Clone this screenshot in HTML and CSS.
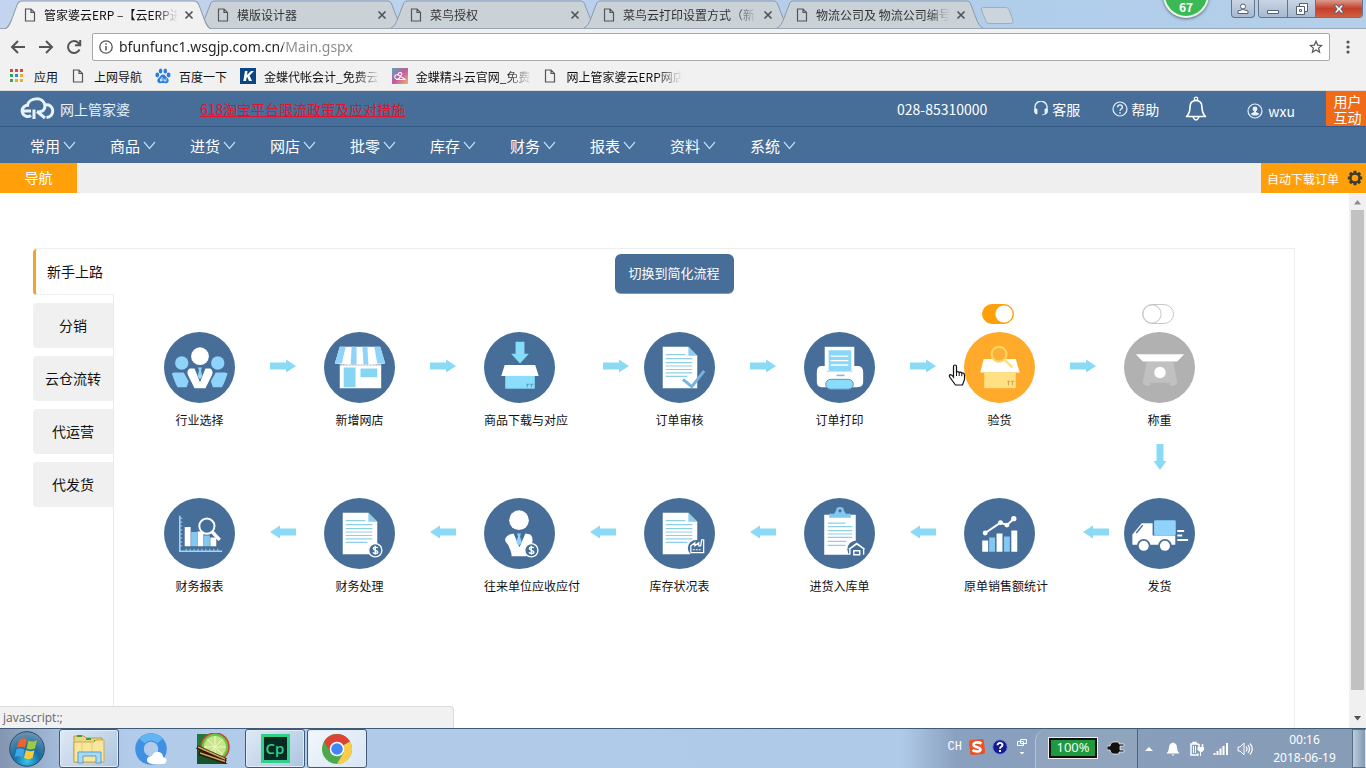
FILE: index.html
```html
<!DOCTYPE html>
<html lang="zh-CN">
<head>
<meta charset="utf-8">
<title>管家婆云ERP</title>
<link rel="stylesheet" href="styles.css">
</head>
<body>
<svg class="defs" aria-hidden="true">
  <defs>
    <symbol id="doc" viewBox="0 0 12 14"><path d="M1.5 1h5.500l3.500 3.500V13h-9zM7 1v3.500h3.500" fill="none" stroke="currentColor" stroke-width="1.200"/></symbol>
    <symbol id="close" viewBox="0 0 10 10"><path d="M1.500 1.500l7 7M8.500 1.500l-7 7" stroke="currentColor" stroke-width="1.700"/></symbol>
    <symbol id="tab-shape" viewBox="0 0 206 28" preserveAspectRatio="none"><path d="M0 28C4 26 5 23 7 18L12 5C13 2 14 1 17 1H189C192 1 193 2 194 5L199 18C201 23 202 26 206 28" stroke="#8d99a8"/></symbol>
    <symbol id="chev" viewBox="0 0 13 9"><path d="M1 1l5.500 6.500L12 1" fill="none" stroke="#b9dcf7" stroke-width="1.200"/></symbol>
    <symbol id="arrow" viewBox="0 0 26 14"><path d="M0 3.500h16V0.500L26 7l-10 6.500v-3H0z" fill="#8bdaf5"/></symbol>
    <symbol id="page" viewBox="0 0 72 72"><path d="M19 15h26l9 9v33H19z" fill="#fff"/><path d="M45 15v9h9z" fill="#8ecdf0"/><path d="M22 23h20M22 27h27M22 31h27M22 34.500h27M22 38h27M22 41.500h27M22 45h22" stroke="#8fcfe6" stroke-width="1.200"/></symbol>
    <symbol id="coin" viewBox="0 0 16 16"><circle cx="8" cy="8" r="6.700" fill="#476e98" stroke="#fff" stroke-width="1.400"/><path d="M10.500 5.700C9.800 4.600 6 4.200 6 6.300S10.500 7.700 10.500 9.800 6.500 11.700 5.500 10.200M8 3.500v9" fill="none" stroke="#fff" stroke-width="1.400"/></symbol>
  </defs>
</svg>

<header class="browser">
  <div class="tabstrip">
    <div class="tab active"><svg class="tab-bg"><use href="#tab-shape"/></svg><svg class="doc"><use href="#doc"/></svg><span class="tab-title">管家婆云ERP –【云ERP进</span><button class="tab-close" aria-label="关闭"><svg><use href="#close"/></svg></button></div>
    <div class="tab"><svg class="tab-bg"><use href="#tab-shape"/></svg><svg class="doc"><use href="#doc"/></svg><span class="tab-title">模版设计器</span><button class="tab-close" aria-label="关闭"><svg><use href="#close"/></svg></button></div>
    <div class="tab"><svg class="tab-bg"><use href="#tab-shape"/></svg><svg class="doc"><use href="#doc"/></svg><span class="tab-title">菜鸟授权</span><button class="tab-close" aria-label="关闭"><svg><use href="#close"/></svg></button></div>
    <div class="tab"><svg class="tab-bg"><use href="#tab-shape"/></svg><svg class="doc"><use href="#doc"/></svg><span class="tab-title">菜鸟云打印设置方式（新</span><button class="tab-close" aria-label="关闭"><svg><use href="#close"/></svg></button></div>
    <div class="tab"><svg class="tab-bg"><use href="#tab-shape"/></svg><svg class="doc"><use href="#doc"/></svg><span class="tab-title">物流公司及 物流公司编号</span><button class="tab-close" aria-label="关闭"><svg><use href="#close"/></svg></button></div>
    <button class="new-tab" aria-label="新标签页"><svg viewBox="0 0 34 17"><path d="M4 .5h22q2 0 3 2l4 11q1 3-2 3H9q-2 0-3-2L1.500 3q-.8-2.500 2.500-2.500z" fill="#ccd5de" stroke="#9fadbc"/></svg></button>
    <div class="speed-ball">67</div>
    <div class="win-buttons">
      <button class="win user" aria-label="用户"><svg viewBox="0 0 14 14"><circle cx="7" cy="4.500" r="2.500"/><path d="M2 11.500V9q5-3 10 0v2.500z"/></svg></button>
      <div class="win-group">
        <button class="win" aria-label="最小化"><svg viewBox="0 0 14 14"><path d="M1.500 8.500h11v3h-11z"/></svg></button>
        <button class="win" aria-label="还原"><svg viewBox="0 0 14 14"><path d="M4.500 1.500h8v8h-8z"/><path d="M1.500 4.500h8v8h-8z"/><path d="M4.500 7.500h2v2h-2z"/></svg></button>
        <button class="win win-close" aria-label="关闭窗口"><svg viewBox="0 0 14 14"><path d="M2 3h3l2 2.500L9 3h3L8.800 7 12 11H9L7 8.500 5 11H2l3.200-4z"/></svg></button>
      </div>
    </div>
  </div>

  <div class="toolbar">
    <button class="tool" aria-label="后退"><svg viewBox="0 0 16 16"><path d="M15 8H2M8 2L2 8l6 6"/></svg></button>
    <button class="tool" aria-label="前进"><svg viewBox="0 0 16 16"><path d="M1 8h13M8 2l6 6-6 6"/></svg></button>
    <button class="tool" aria-label="刷新"><svg viewBox="0 0 16 16"><path d="M13.500 10.500A6 6 0 1 1 12.500 4L14 5.800M14.200 1v5.200H9"/></svg></button>
    <div class="omnibox">
      <svg class="info" viewBox="0 0 14 14"><circle cx="7" cy="7" r="6.200" fill="none" stroke="#555" stroke-width="1.300"/><path d="M7 6v4.500M7 3.300v1.500" stroke="#555" stroke-width="1.500"/></svg>
      <input class="url" type="text" aria-label="地址栏" value="bfunfunc1.wsgjp.com.cn/Main.gspx">
      <button class="star" aria-label="收藏"><svg viewBox="0 0 16 16"><path d="M8 1.500l1.900 4.300 4.600.4-3.500 3.100 1.100 4.600L8 11.500l-4.100 2.400L5 9.300 1.500 6.200l4.600-.4z" fill="none" stroke="#555" stroke-width="1.400"/></svg></button>
    </div>
    <button class="kebab" aria-label="菜单"><svg viewBox="0 0 4 14"><circle cx="2" cy="2" r="1.600"/><circle cx="2" cy="7" r="1.600"/><circle cx="2" cy="12" r="1.600"/></svg></button>
  </div>

  <nav class="bookmarks" aria-label="书签">
    <a href="#" class="bm"><svg class="ic14" viewBox="0 0 14 14"><path d="M0 0h3v3H0zM5 0h3v3H5zM10 0h3v3h-3z" fill="#d5483e"/><path d="M0 5h3v3H0zM0 10h3v3H0z" fill="#39a35a"/><path d="M5 5h3v3H5z" fill="#3d7fe0"/><path d="M10 5h3v3h-3zM10 10h3v3h-3zM5 10h3v3H5z" fill="#e9ac2f"/></svg>应用</a>
    <a href="#" class="bm"><svg class="doc"><use href="#doc"/></svg>上网导航</a>
    <a href="#" class="bm"><svg class="ic16" viewBox="0 0 16 16"><g fill="#2c7be0"><ellipse cx="2.300" cy="7" rx="1.900" ry="2.400"/><ellipse cx="5.600" cy="3" rx="1.800" ry="2.500"/><ellipse cx="10.300" cy="3" rx="1.800" ry="2.500"/><ellipse cx="13.600" cy="7" rx="1.900" ry="2.400"/><path d="M8 6.500c2 0 2.700 2 4 3.200 1.500 1.300 2 2.200 1.500 3.800-.8 2.500-3.500 1.500-5.500 1.500s-4.700 1-5.500-1.500C2 11.900 2.500 11 4 9.700 5.300 8.500 6 6.500 8 6.500z"/></g><path d="M7 9v4H5.500v-2H7M9 10.500V13h2v-2.500" stroke="#fff" stroke-width=".8" fill="none"/></svg>百度一下</a>
    <a href="#" class="bm"><svg class="ic16" viewBox="0 0 16 16"><path d="M0 0h16v16H0z" fill="#0a4586"/><path d="M5 3h2.500L7 7l4-4h3L9.500 7.500 12 13H9L7.300 9 6.500 10 6 13H3.300z" fill="#fff"/></svg><span class="fade">金蝶代帐会计_免费云</span></a>
    <a href="#" class="bm"><svg class="ic16" viewBox="0 0 16 16"><defs><linearGradient id="jd" x2="1" y2="1"><stop stop-color="#56a9b4"/><stop offset=".5" stop-color="#c35aa0"/><stop offset="1" stop-color="#f0b36a"/></linearGradient></defs><path d="M0 0h16v16H0z" fill="url(#jd)"/><path d="M13.500 11.500L5.500 6.500Q2 7 3 10q1.500 2 4 .5l2-3Q11 5 8.500 4.500 6 4.500 6 7M4 11.500h9" fill="none" stroke="#fff" stroke-width="1.100"/></svg><span class="fade">金蝶精斗云官网_免费</span></a>
    <a href="#" class="bm"><svg class="doc"><use href="#doc"/></svg><span class="fade">网上管家婆云ERP网店</span></a>
  </nav>
</header>

<div class="app">
  <div class="app-top">
    <a class="logo" href="#"><svg viewBox="0 0 38 24"><g fill="none" stroke="#e6f2fc" stroke-width="3"><path d="M11 8.500A5.600 5.600 0 1 0 13 18.500M3 14h10"/><path d="M9 9C11 0 26-1 27 9c0 4-3 6-8 6M16 12.500V22M19 14.500l8 6.500"/><path d="M27 8c9-2 11 11.500 1.500 12.500"/></g></svg><span>网上管家婆</span></a>
    <a class="notice" href="#">618淘宝平台限流政策及应对措施</a>
    <div class="top-right">
      <span class="phone">028-85310000</span>
      <a class="tr service" href="#"><svg class="ic16" viewBox="0 0 16 16"><path d="M3 9.500A6 6 0 1 1 13 9.500" fill="none" stroke="#e6f2fc" stroke-width="1.500"/><path d="M1.500 8h2.500v5H3q-2-1-1.500-5zM14.500 8H12v5h1q2-1 1.500-5zM9 14l3.500-1" fill="#e6f2fc" stroke="#e6f2fc" stroke-width=".8"/></svg>客服</a>
      <a class="tr help" href="#"><svg class="ic16" viewBox="0 0 16 16"><circle cx="8" cy="8" r="7" fill="none" stroke="#e6f2fc" stroke-width="1.200"/><path d="M5.600 6.300c0-3.200 5-3.200 4.800-.2C10.300 8 8 7.900 8 9.800M8 11.200v1.500" fill="none" stroke="#e6f2fc" stroke-width="1.400"/></svg>帮助</a>
      <button class="bell" aria-label="通知"><svg viewBox="0 0 22 26"><path d="M1.500 20.500Q5 17 5 11.500C5 6.500 7 4.500 11 4.500s6 2 6 7q0 5.500 3.500 9zM8 21q3 6 6 0" fill="none" stroke="#fff" stroke-width="1.600" stroke-linejoin="round"/><circle cx="11" cy="2.800" r="1.700" fill="none" stroke="#fff" stroke-width="1.300"/></svg></button>
      <a class="tr account" href="#"><svg class="ic16" viewBox="0 0 16 16"><circle cx="8" cy="8" r="7" fill="none" stroke="#e6f2fc" stroke-width="1.200"/><circle cx="8" cy="6" r="2.400" fill="#e6f2fc"/><path d="M7 7h2v2l3 1.500q0 2-4 2t-4-2L7 9z" fill="#e6f2fc"/></svg>wxu</a>
      <a class="interact" href="#"><span>用户</span><span>互动</span></a>
    </div>
  </div>
  <nav class="menu">
    <a href="#">常用<svg><use href="#chev"/></svg></a><a href="#">商品<svg><use href="#chev"/></svg></a><a href="#">进货<svg><use href="#chev"/></svg></a><a href="#">网店<svg><use href="#chev"/></svg></a><a href="#">批零<svg><use href="#chev"/></svg></a><a href="#">库存<svg><use href="#chev"/></svg></a><a href="#">财务<svg><use href="#chev"/></svg></a><a href="#">报表<svg><use href="#chev"/></svg></a><a href="#">资料<svg><use href="#chev"/></svg></a><a href="#">系统<svg><use href="#chev"/></svg></a>
  </nav>
  <div class="page-tabs">
    <button class="page-tab">导航</button>
    <button class="auto-download">自动下载订单<svg viewBox="0 0 16 16"><path d="M8 .8v14.400M.8 8h14.400M2.900 2.900l10.200 10.200M13.100 2.900L2.900 13.100" stroke="#3c3c2c" stroke-width="3"/><circle cx="8" cy="8" r="5.800" fill="#3c3c2c"/><circle cx="8" cy="8" r="3.300" fill="#ffa00a"/></svg></button>
  </div>

  <div class="viewport">
    <main class="card">
      <aside class="side">
        <button class="side-item on">新手上路</button>
        <button class="side-item">分销</button>
        <button class="side-item">云仓流转</button>
        <button class="side-item">代运营</button>
        <button class="side-item">代发货</button>
      </aside>
      <section class="panel">
        <div class="switch-row"><button class="switch-flow">切换到简化流程</button></div>
        <div class="flow">
          <div class="step"><a class="node" href="#"><svg class="disc" viewBox="0 0 72 72"><circle class="blue" cx="36" cy="36" r="36"/><g fill="#8fd3fa"><circle cx="18" cy="31.500" r="6.800"/><circle cx="54.500" cy="31.500" r="6.800"/><path d="M10 41h10l5 9-2 6h-9q-2-2-6-14zM62.500 41h-10l-5 9 2 6h9q2-2 6-14z"/></g><circle cx="36.500" cy="24.500" r="9" fill="#fff"/><path d="M26 37h5l5.500 14L42 37h5q4 3 1 8l-6 12H31l-6-12q-3-5 1-8z" fill="#fff"/><path d="M34.500 36h4l-1 3 1.500 6-2.500 3-2.500-3 1.500-6z" fill="#8fd3fa"/></svg><span>行业选择</span></a><svg class="arrow"><use href="#arrow"/></svg></div>
          <div class="step"><a class="node" href="#"><svg class="disc" viewBox="0 0 72 72"><circle class="blue" cx="36" cy="36" r="36"/><path d="M16 33h42v24H16z" fill="#fff"/><path d="M16 15h41l5 17q-25 4-51 0z" fill="#fff"/><path d="M16 15h6l-4 17-7 0zM28 15h5v18h-6zM39 15h5l1 18h-5zM51 15h6l5 17h-8z" fill="#8fd3fa"/><path d="M20 36h12v20H20zM37 37h17v9H37z" fill="#86d5f3"/><path d="M16 33.500h42" stroke="#9aabb8" stroke-dasharray="2 1"/></svg><span>新增网店</span></a><svg class="arrow"><use href="#arrow"/></svg></div>
          <div class="step"><a class="node" href="#"><svg class="disc" viewBox="0 0 72 72"><circle class="blue" cx="36" cy="36" r="36"/><path d="M32 10h9v12h4.500L36.500 32 27.500 22H32z" fill="#86dcfb"/><path d="M21 33.500h31l3.500 11h-38z" fill="#fff"/><path d="M21.500 44.500H51.500v13h-30z" fill="#8cdcfb"/><path d="M43 53h3M44 53v3M47 53h3M48 53v3" stroke="#5899bb"/></svg><span>商品下载与对应</span></a><svg class="arrow"><use href="#arrow"/></svg></div>
          <div class="step"><a class="node" href="#"><svg class="disc" viewBox="0 0 72 72"><circle class="blue" cx="36" cy="36" r="36"/><use href="#page"/><path d="M39.500 48l9 7.500L61 39.500" fill="none" stroke="#76b3df" stroke-width="3"/></svg><span>订单审核</span></a><svg class="arrow"><use href="#arrow"/></svg></div>
          <div class="step"><a class="node" href="#"><svg class="disc" viewBox="0 0 72 72"><circle class="blue" cx="36" cy="36" r="36"/><path d="M21 15h30v25H21z" fill="#fff"/><path d="M25 18.500h23V41H25z" fill="#8bd7f7"/><path d="M27 24.500h18M27 29h18M27 33.500h18" stroke="#fff" stroke-width="1.400"/><path d="M18 34.500h5V40h26v-5.500h5q6 0 6 6V51q0 5-6 5H18q-5 0-5-5V40.500q0-6 5-6z" fill="#fff"/><path d="M33 44h8" stroke="#78bde2" stroke-width="1.600"/><rect x="22" y="48" width="28" height="10" rx="5" fill="#8bdcfb" stroke="#5b93bd"/></svg><span>订单打印</span></a><svg class="arrow"><use href="#arrow"/></svg></div>
          <div class="step"><div class="stack"><input class="toggle" type="checkbox" aria-label="启用验货" checked><a class="node" href="#"><svg class="disc" viewBox="0 0 72 72"><circle cx="36" cy="36" r="36" fill="#ffaa2b"/><path d="M20 27.500h32.500l4 13.500h-40z" fill="#fff"/><path d="M20.500 41h32v16h-32z" fill="#ffe184"/><path d="M44 50h3M45 50v4M48 50h3M49 50v4" stroke="#c79e4b"/><circle cx="35.500" cy="22.500" r="7.500" fill="#fbb03a" stroke="#ffd75e" stroke-width="2.200"/><path d="M41 28l8 8" stroke="#ffdf80" stroke-width="2.500"/></svg><span>验货</span></a></div><svg class="arrow"><use href="#arrow"/></svg></div>
          <div class="step"><div class="stack"><input class="toggle" type="checkbox" aria-label="启用称重"><a class="node" href="#"><svg class="disc" viewBox="0 0 72 72"><circle cx="36" cy="36" r="36" fill="#b1b1b1"/><path d="M23 30.500h27l4 21-3 3h-4v-3H26v3h-4l-3-3z" fill="#c1c1c1"/><path d="M12 22.500h49l-7 7.500H19z" fill="#fff"/><circle cx="36.500" cy="41" r="5.800" fill="#fff"/></svg><span>称重</span></a></div></div>

          <div class="turn"><svg viewBox="0 0 14 26"><path d="M3.500 0h7v17h3L7 26 .5 17h3z" fill="#8bdaf5"/></svg></div>

          <div class="step"><a class="node" href="#"><svg class="disc" viewBox="0 0 72 72"><circle class="blue" cx="36" cy="36" r="36"/><path d="M16 18v36h43" fill="none" stroke="#9fd8f8" stroke-width="1.600"/><path d="M17.500 20v32" stroke="#9fd8f8" stroke-width="2" stroke-dasharray="1 3"/><path d="M22 52.500h33" stroke="#9fd8f8" stroke-width="2" stroke-dasharray="1 3"/><path d="M21 29.500h6V49h-6zM34 34h6v15h-6zM47 40h6v9h-6z" fill="#fff"/><path d="M27.500 34.500h6V49h-6zM40.500 38h6v11h-6z" fill="#82c8f0"/><circle cx="43.500" cy="28.500" r="7.700" fill="#476e98" stroke="#fff" stroke-width="2"/><path d="M49 34.500l7.500 8" stroke="#fff" stroke-width="3.500"/></svg><span>财务报表</span></a><svg class="arrow back"><use href="#arrow"/></svg></div>
          <div class="step"><a class="node" href="#"><svg class="disc" viewBox="0 0 72 72"><circle class="blue" cx="36" cy="36" r="36"/><use href="#page"/><use href="#coin" x="44" y="45" width="16" height="16"/></svg><span>财务处理</span></a><svg class="arrow back"><use href="#arrow"/></svg></div>
          <div class="step tight"><a class="node" href="#"><svg class="disc" viewBox="0 0 72 72"><circle class="blue" cx="36" cy="36" r="36"/><circle cx="35.500" cy="22.500" r="10" fill="#fff"/><path d="M26 37l4-1 6 14 6-14 5 1q4 4 1 11l-5 11H28q0-5-4-12-6-6 2-10z" fill="#fff"/><path d="M33.500 36h4l-1 3 2 6-3 3-3-3 2-6z" fill="#8fd3fa"/><use href="#coin" x="40" y="45" width="16" height="16"/></svg><span>往来单位应收应付</span></a><svg class="arrow back"><use href="#arrow"/></svg></div>
          <div class="step"><a class="node" href="#"><svg class="disc" viewBox="0 0 72 72"><circle class="blue" cx="36" cy="36" r="36"/><use href="#page"/><circle cx="53" cy="51" r="8.500" fill="#476e98"/><path d="M47.500 55.500v-7l4-3v3l4-3v3h2l1-6h2v13z" fill="#476e98" stroke="#fff" stroke-width="1.300"/><path d="M49.500 52.500h9" stroke="#fff" stroke-dasharray="2 1"/></svg><span>库存状况表</span></a><svg class="arrow back"><use href="#arrow"/></svg></div>
          <div class="step"><a class="node" href="#"><svg class="disc" viewBox="0 0 72 72"><circle class="blue" cx="36" cy="36" r="36"/><path d="M20.500 17h32v40.500h-32z" fill="#fff"/><path d="M25.500 20v-4h5l2-3a4 4 0 1 1 8 0l2 3h5v4z" fill="#82c8f0"/><circle cx="36.500" cy="13" r="1.600" fill="#476e98"/><path d="M24 25.500h18M24 29h25M24 33h25M24 36.500h25M24 40h25M24 44h19M24 48h18" stroke="#8fcfe6" stroke-width="1.200"/><circle cx="53" cy="52" r="9" fill="#476e98"/><path d="M46.500 57.500v-6l7-5 7 5v6M45.500 52l8-6 8 6M50.500 57.500v-4h6v4z" fill="none" stroke="#fff" stroke-width="1.400"/></svg><span>进货入库单</span></a><svg class="arrow back"><use href="#arrow"/></svg></div>
          <div class="step"><a class="node" href="#"><svg class="disc" viewBox="0 0 72 72"><circle class="blue" cx="36" cy="36" r="36"/><path d="M18.500 43h6v11.500h-6zM33 36h6v18.500h-6zM48 33h6v21.500h-6z" fill="#fff"/><path d="M25.500 40h6v14.500h-6zM40.500 39h6v15.500h-6z" fill="#82c8f0"/><path d="M21.500 35.500L37 25l6.500 2.500 7-6.500" fill="none" stroke="#fff" stroke-width="2"/><g fill="#fff"><circle cx="21.500" cy="35.500" r="2.500"/><circle cx="37" cy="25" r="2.500"/><circle cx="43.500" cy="27.500" r="2.500"/><circle cx="50.500" cy="21" r="2.700"/></g></svg><span>原单销售额统计</span></a><svg class="arrow back"><use href="#arrow"/></svg></div>
          <div class="step"><a class="node" href="#"><svg class="disc" viewBox="0 0 72 72"><circle class="blue" cx="36" cy="36" r="36"/><path d="M18 25.500h11V38h23v9.500H8.500V37z" fill="#fff"/><path d="M12.500 35.500l6.500-8" stroke="#476e98" stroke-width="1.500"/><rect x="30.500" y="22.500" width="22" height="15.500" rx="1.500" fill="#8fd3fa"/><g fill="#fff" stroke="#476e98" stroke-width="1.800"><circle cx="20" cy="48.500" r="6"/><circle cx="41.500" cy="48.500" r="6"/></g><path d="M54 33.500h7M54 38h5M54 42.500h11" stroke="#fff" stroke-width="2"/></svg><span>发货</span></a></div>
        </div>
      </section>
    </main>
    <div class="scrollbar" aria-hidden="true"><svg viewBox="0 0 9 5"><path d="M4.500 0L8 4.500H1z" fill="#8b8b8b"/></svg><div class="thumb"></div><svg viewBox="0 0 9 5"><path d="M4.500 4.500L8 0H1z" fill="#505050"/></svg></div>
    <div class="status">javascript:;</div>
    <svg class="pointer" viewBox="0 0 18 23"><path d="M5.500 13V2.500Q5.500 1 7 1t1.500 1.500V8q1.200-1 2.700.4 1.500-.8 2.500.6 2.500-.4 2.800 2v4.500L14.500 21H7.500L2 13.500q-1.500-2.500.3-2.800Q4 10.800 5.500 13z" fill="#fff" stroke="#111" stroke-width="1.200"/><path d="M8.500 8v4M11.200 8.500V12M13.800 9v3.200" stroke="#111"/></svg>
  </div>
</div>

<footer class="taskbar">
  <button class="start" aria-label="开始"><svg viewBox="0 0 36 36"><defs><radialGradient id="orb" cy=".85" r=".85"><stop stop-color="#35c5f0"/><stop offset=".45" stop-color="#176b9f"/><stop offset="1" stop-color="#6f95b3"/></radialGradient></defs><circle cx="18" cy="18" r="17.300" fill="url(#orb)" stroke="#2b4a66"/><path d="M10 9q4-3 8-.5L16 17q-4-2.200-8.200-.3z" fill="#ee6130"/><path d="M19.500 9.500q4 2 8.500-.3l-2 8.300q-4.500 2.200-8.500 0z" fill="#9ccb3c"/><path d="M7.500 18.300q4-2 8 .3l-2 8q-4-2.300-8-.3z" fill="#3fa4e8"/><path d="M17 19q4 2.300 8.500.3l-2 7.800q-4 2.200-8.500 0z" fill="#fbcb35"/></svg></button>
  <button class="task open" aria-label="资源管理器"><svg viewBox="0 0 34 32"><path d="M2 3h10l2 2h16v24H2z" fill="#ecd680" stroke="#bb9b48"/><path d="M5 3h5M14 6h5M22 8h5" stroke="#3c9d52" stroke-width="2"/><path d="M2 9h20l2-2h8v22H2z" fill="#f8e69d" stroke="#c8aa55"/><path d="M10 9v15M20 9v15" stroke="#e6cc76"/><path d="M6 30V19h23v11h-5v-7H11v7z" fill="#a7daf4" stroke="#5b9ecb"/></svg></button>
  <button class="task" aria-label="浏览器"><svg viewBox="0 0 34 32"><circle cx="17" cy="16" r="11.500" fill="none" stroke="#3f8fe3" stroke-width="8.500"/><path d="M8 8a12 12 0 0 1 18 0" fill="none" stroke="#62b4f3" stroke-width="7"/><path d="M18 31q-6-1-5-5 1-3 5-3 2-5 7-4 4 1 4 5 4 1 3.500 4-.5 3-4 3z" fill="#fff"/></svg></button>
  <button class="task" aria-label="绘图"><svg viewBox="0 0 34 32"><path d="M1 1h15v30H1z" fill="#1f7a38"/><circle cx="19" cy="14" r="14" fill="#68c842" stroke="#c8453a" stroke-width="1.500"/><circle cx="19" cy="14" r="11" fill="#c7e58a"/><path d="M19 3v22M8 14h22M11 6l16 16M27 6L11 22" stroke="#f0f7c8"/><path d="M1 14l31 17H1z" fill="#14552b"/><path d="M1 14l29 13M3 20l27 9" stroke="#2b1a0d" stroke-width="4"/><path d="M2 14l27 12M4 20l25 8.500" stroke="#d5a35d" stroke-width="1.500"/></svg></button>
  <button class="task open" aria-label="Captivate"><span class="cp">Cp</span></button>
  <button class="task open current" aria-label="Chrome"><svg viewBox="0 0 32 32"><circle cx="16" cy="16" r="15" fill="#4ea850"/><path d="M16 16L3 8.500a15 15 0 0 1 26 0z" fill="#db4437"/><path d="M16 16h0L29 8.500A15 15 0 0 1 16 31l7-12z" fill="#fccd48"/><path d="M3 8.500L9.500 19.500 16 9h13z" fill="#db4437"/><circle cx="16" cy="16" r="7.300" fill="#fff"/><circle cx="16" cy="16" r="5.800" fill="#4285f4"/></svg></button>
  <div class="tray">
    <div class="lang"><span class="ch">CH</span><svg class="ic16" viewBox="0 0 16 16"><rect x=".5" y=".5" width="15" height="15" rx="2" fill="#ef5126" transform="rotate(-6 8 8)"/><path d="M12.500 4.500C9 2.500 4 3.500 4.500 6s7 2 7 4.500S6 13 3.500 11" fill="none" stroke="#fff" stroke-width="2.600"/></svg><svg class="ic16" viewBox="0 0 16 16"><circle cx="8" cy="8" r="7.300" fill="#151b8d" stroke="#7f8de0"/><path d="M5.500 6.300c0-3.200 5.200-3.200 5-.2C10.300 8 8 7.700 8 9.800M8 11v2" fill="none" stroke="#fff" stroke-width="1.900"/></svg><svg class="restore" viewBox="0 0 10 16"><path d="M3.500 .5h6v4h-6zM.5 2.500h6v4h-6z" fill="#8ba2c0" stroke="#fff"/><path d="M2.500 13h5L5 15.500z" fill="#fff"/></svg></div>
    <div class="power"><span class="battery">100%</span><svg viewBox="0 0 18 14"><path d="M6 1h6v2h5v2h-4v4h4v2h-5v2H6q-3-1-3-4H0V5h3q0-3 3-4z" fill="#111" stroke="#eee" stroke-width=".8"/></svg></div>
    <div class="tray-icons">
      <svg viewBox="0 0 16 16"><path d="M8 6l4 4H4z" fill="#fff"/></svg>
      <svg viewBox="0 0 16 16"><path d="M1.500 12.500q2.500-2 2.500-6 0-4 4-5 4 1 4 5 0 4 2.500 6zM6.500 13.500h3L8 15z" fill="#fff"/></svg>
      <svg viewBox="0 0 16 16"><path d="M9 4V3H2v11h7v-1.500M4 1.500h3V3H4z" fill="none" stroke="#fff" stroke-width="1.500"/><path d="M4.500 5v7M6.500 5v7" stroke="#fff"/><path d="M10 3v3M13.500 3v3" stroke="#fff" stroke-width="1.500"/><path d="M8.500 6H15v3l-2 2h-1v4h-1v-4l-2.500-2z" fill="#fff"/></svg>
      <svg viewBox="0 0 16 16"><path d="M1.500 12v2M4.500 10v4M7.500 7.500V14M10.500 5v9M14 2v12" stroke="#fff" stroke-width="2"/></svg>
      <svg viewBox="0 0 16 16"><path d="M1 6h2l4-4v12l-4-4H1z" fill="#8ca0b9" stroke="#fff"/><path d="M9 5.500q2 2.500 0 5M11 4q3 4 0 8M13 2.500q4.500 5.500 0 11" fill="none" stroke="#fff" stroke-width="1.200"/></svg>
    </div>
    <div class="clock"><span>00:16</span><span>2018-06-19</span></div>
    <button class="desktop" aria-label="显示桌面"></button>
  </div>
</footer>
</body>
</html>
```

FILE: styles.css
```css
* { box-sizing: border-box; }
body {
  margin: 0;
  height: 100vh;
  display: flex;
  flex-direction: column;
  overflow: hidden;
  font-family: "Noto Sans CJK SC", sans-serif;
  font-size: 12px;
  color: #111;
  background: #fff;
}
a { color: inherit; text-decoration: none; }
button { font: inherit; color: inherit; border: 0; padding: 0; background: none; }
svg { display: block; flex: none; }
.defs { position: absolute; width: 0; height: 0; }
.doc { width: 12px; height: 14px; color: #555; }
.ic14 { width: 14px; height: 14px; }
.ic16 { width: 16px; height: 16px; }

/* browser frame */
.browser { flex: none; background: #f1f1f1; }
.tabstrip {
  position: relative;
  display: flex;
  height: 29px;
  padding-left: 5px;
  background: linear-gradient(90deg, #c3d5ee, #b0cdea 75%, #b4cfe9);
  border-bottom: 1px solid #98a5b5;
}
.tab {
  position: relative;
  display: flex;
  align-items: center;
  width: 206px;
  height: 29px;
  margin-right: -13px;
  padding: 0 17px 0 19px;
  color: #333;
}
.tab-bg { position: absolute; left: 0; top: 0; width: 206px; height: 28px; fill: #cad2d8; }
.tab.active { z-index: 1; color: #111; }
.tab.active .tab-bg { fill: #f1f1f1; height: 29px; }
.tab .doc, .tab-title, .tab-close { position: relative; }
.tab-title {
  width: 140px;
  margin-left: 8px;
  white-space: nowrap;
  -webkit-mask-image: linear-gradient(90deg, #000 112px, transparent 134px);
}
.tab-close { width: 10px; height: 10px; margin-left: auto; color: #555; }
.tab-close svg { width: 10px; height: 10px; }
.new-tab { margin: 7px 0 0 10px; width: 34px; height: 17px; }
.speed-ball {
  position: absolute;
  right: 157px;
  top: -28px;
  width: 46px;
  height: 46px;
  border: 2px solid #e8f7ea;
  border-radius: 50%;
  background: #3cb954;
  box-shadow: 0 1px 3px #567;
  color: #fff;
  font-size: 12px;
  font-weight: 700;
  line-height: 16px;
  text-align: center;
  padding-top: 25px;
}
.win-buttons { display: flex; gap: 3px; margin-left: auto; margin-right: 3px; height: 18px; }
.win { display: flex; align-items: center; justify-content: center; width: 28px; height: 17px; background: linear-gradient(#c8d5e4, #a6b9cf); }
.win svg { width: 14px; height: 14px; fill: #fff; stroke: #555f72; }
.win.user { width: 24px; border: 1px solid #63748b; border-top: 0; border-radius: 0 0 4px 4px; height: 18px; }
.win-group { display: flex; border: 1px solid #63748b; border-top: 0; border-radius: 0 0 4px 4px; overflow: hidden; }
.win-group .win + .win { border-left: 1px solid #63748b; }
.win.win-close { width: 47px; background: linear-gradient(#dc9a8c, #c3402a 50%, #d25d42); }

.toolbar { display: flex; align-items: center; height: 35px; padding: 0 16px 0 10px; }
.tool { width: 16px; height: 16px; margin-right: 12px; }
.tool svg { width: 16px; height: 16px; fill: none; stroke: #555; stroke-width: 2; }
.omnibox {
  flex: 1;
  display: flex;
  align-items: center;
  height: 28px;
  margin: 0 0 0 -2px;
  padding: 0 6px;
  background: #fff;
  border: 1px solid #a9a9a9;
  border-radius: 2px;
}
.info { width: 14px; height: 14px; }
.url {
  flex: 1;
  min-width: 0;
  height: 24px;
  margin-left: 6px;
  padding: 0;
  border: 0;
  outline: 0;
  font: 14px "Noto Sans", sans-serif;
  color: transparent;
  background: linear-gradient(90deg, #222 164px, #888 164px);
  -webkit-background-clip: text;
  background-clip: text;
}
.star, .star svg { width: 14px; height: 14px; }
.kebab { width: 4px; height: 14px; margin-left: 16px; }
.kebab svg { width: 4px; height: 14px; fill: #555; }

.bookmarks { display: flex; align-items: center; height: 27px; padding: 0 0 2px 10px; border-bottom: 1px solid #dcdcdc; }
.bm { display: flex; align-items: center; gap: 10px; margin-right: 14px; white-space: nowrap; }
.bm .ic16 { margin: 0 -2px 0 -1px; }
.fade { min-width: 112px; max-width: 116px; -webkit-mask-image: linear-gradient(90deg, #000 90px, transparent 116px); }

/* application */
.app { flex: 1; min-height: 0; display: flex; flex-direction: column; }
.app-top { display: flex; align-items: center; height: 36px; flex: none; padding-left: 18px; background: #476e98; border-bottom: 1px solid #325a85; color: #fff; font-size: 14px; }
.logo { display: flex; align-items: center; gap: 4px; color: #e6f2fc; }
.logo svg { width: 38px; height: 24px; }
.notice { margin-left: 70px; color: #e0142c; text-decoration: underline; }
.top-right { display: flex; align-items: center; align-self: stretch; margin-left: auto; }
.tr { display: flex; align-items: center; gap: 3px; }
.service { margin-left: 46px; }
.help { margin-left: 32px; }
.bell { width: 22px; height: 26px; margin-left: 26px; }
.account { gap: 5px; margin: 4px 31px 0 40px; }
.interact { display: flex; flex-direction: column; align-items: center; justify-content: center; align-self: stretch; width: 40px; padding-left: 3px; background: #f06a17; line-height: 16px; }

.menu { display: flex; align-items: center; height: 36px; flex: none; padding-left: 30px; background: #476e98; color: #fff; font-size: 15px; }
.menu a { display: flex; align-items: center; gap: 3px; width: 80px; }
.menu svg { width: 13px; height: 9px; }

.page-tabs { display: flex; justify-content: space-between; height: 30px; flex: none; background: #efefef; color: #fff; }
.page-tab { width: 77px; padding-bottom: 2px; background: #ffa00a; font-size: 14px; }
.auto-download { display: flex; align-items: center; gap: 8px; padding: 0 3px 0 6px; background: #ffa00a; }
.auto-download svg { width: 16px; height: 16px; }

.viewport { position: relative; flex: 1; min-height: 0; display: flex; }
.card { flex: 1; display: flex; margin: 55px 54px 0 33px; border-top: 1px solid #eee; border-right: 1px solid #eee; }
.side { display: flex; flex-direction: column; gap: 8px; width: 81px; flex: none; border-right: 1px solid #eaeaea; }
.side-item { height: 45px; padding-bottom: 2px; background: #f0f0f0; border-radius: 4px 0 0 4px; font-size: 14px; }
.side-item.on { height: 46px; margin-right: -1px; background: #fff; border-left: 3px solid #efa52c; border-bottom: 1px solid #eee; }
.panel { flex: 1; min-width: 0; }
.switch-row { display: flex; justify-content: center; padding: 5px 60px 10px 0; }
.switch-flow { width: 119px; height: 40px; padding-bottom: 2px; border-radius: 6px; background: #476e98; border-bottom: 1px solid #7f99b5; color: #fff; font-size: 13px; }
.flow { display: grid; grid-template-columns: repeat(7, 1fr); padding: 0 10px 0 50px; }
.step { display: flex; align-items: flex-end; min-width: 0; }
.node { display: block; flex: none; min-width: 71px; margin-right: 35px; }
.node span { display: block; margin-top: 7px; line-height: 20px; text-align: center; white-space: nowrap; }
.tight .node { margin-right: 10px; }
.disc { width: 71px; height: 71px; }
.blue { fill: #476e98; }
.arrow { width: 26px; height: 14px; margin-bottom: 57px; }
.arrow.back { transform: scaleX(-1); }
.toggle {
  appearance: none;
  display: block;
  width: 32px;
  height: 20px;
  margin: 0 0 8px 18px;
  border: 1px solid #c8c8c8;
  border-radius: 10px;
  background: radial-gradient(circle at 9px 9px, #fff 8px, #c8c8c8 9px, #fff 10px);
}
.toggle:checked { border-color: #ffa00a; background: radial-gradient(circle at 21px 9px, #fff 8px, #ffa00a 9px); }
.turn { grid-column: 7; padding: 14px 0 28px 29px; }
.turn svg { width: 14px; height: 26px; }

.scrollbar { display: flex; flex-direction: column; align-items: center; gap: 5px; width: 17px; padding: 7px 0; background: #f0f0f0; }
.scrollbar svg { width: 9px; height: 5px; }
.thumb { width: 13px; flex: 1; margin-bottom: 21px; background: #c1c1c1; }
.status {
  position: absolute;
  left: 0;
  bottom: 0;
  width: 454px;
  height: 22px;
  padding-left: 3px;
  background: #f1f1f1;
  border: 1px solid #dadada;
  border-width: 1px 1px 0 0;
  border-radius: 0 4px 0 0;
  font: 12px/21px "Open Sans", sans-serif;
  color: #666;
}
.pointer { position: absolute; left: 948px; top: 171px; width: 18px; height: 23px; }

/* desktop taskbar */
.taskbar { display: flex; flex: none; gap: 2px; height: 40px; border-top: 1px solid #3e5a76; background: linear-gradient(90deg, #8395b0, #a4bcdb 60px, #b1cbe8 130px, #afcae8 66%, #8aa0bf 70%, #869bb5); }
.start { width: 57px; padding-left: 9px; }
.start svg { width: 36px; height: 36px; }
.task { display: flex; align-items: center; justify-content: center; width: 60px; height: 39px; border: 1px solid transparent; border-radius: 3px; }
.task svg { width: 34px; height: 32px; }
.task.open { border-color: #40597a; background: linear-gradient(135deg, #dfe9f4, #adc5e1); box-shadow: inset 0 0 0 1px #e1ecf7; }
.task.current { background: linear-gradient(135deg, #f3f7fb, #d7e5f3); }
.cp { width: 29px; height: 29px; border: 3px solid #2ed08a; background: #062c22; color: #2ed08a; font: 600 15px/22px "Open Sans", sans-serif; }
.tray { display: flex; margin-left: auto; color: #fff; }
.lang { display: flex; align-items: center; gap: 7px; padding: 0 8px 4px 0; }
.ch { font: 12px "Liberation Mono", monospace; }
.restore { width: 10px; height: 16px; margin-left: 2px; }
.power { display: flex; align-items: center; justify-content: space-between; width: 103px; padding: 0 12px 2px 13px; border-left: 1px solid #b5c4d6; border-right: 1px solid #4c617d; border-radius: 12px 0 0 0; background: #90a5bd; }
.power svg { width: 18px; height: 14px; }
.battery { width: 48px; height: 20px; border: 2px solid #111; outline: 1px solid #eee; background: #1d9a3f; font: 13px/15px "Open Sans", sans-serif; text-align: center; }
.tray-icons { display: flex; align-items: center; gap: 8px; width: 119px; padding-left: 3px; }
.tray-icons svg { width: 16px; height: 16px; }
.clock { display: flex; flex-direction: column; width: 95px; padding-top: 2px; text-align: center; line-height: 18px; font-family: "Noto Sans", sans-serif; font-size: 12px; }
.desktop { width: 14px; border: 1px solid #596e89; border-right-color: #dbe6f1; background: linear-gradient(90deg, #bdcddd, #8298b2); }
```
